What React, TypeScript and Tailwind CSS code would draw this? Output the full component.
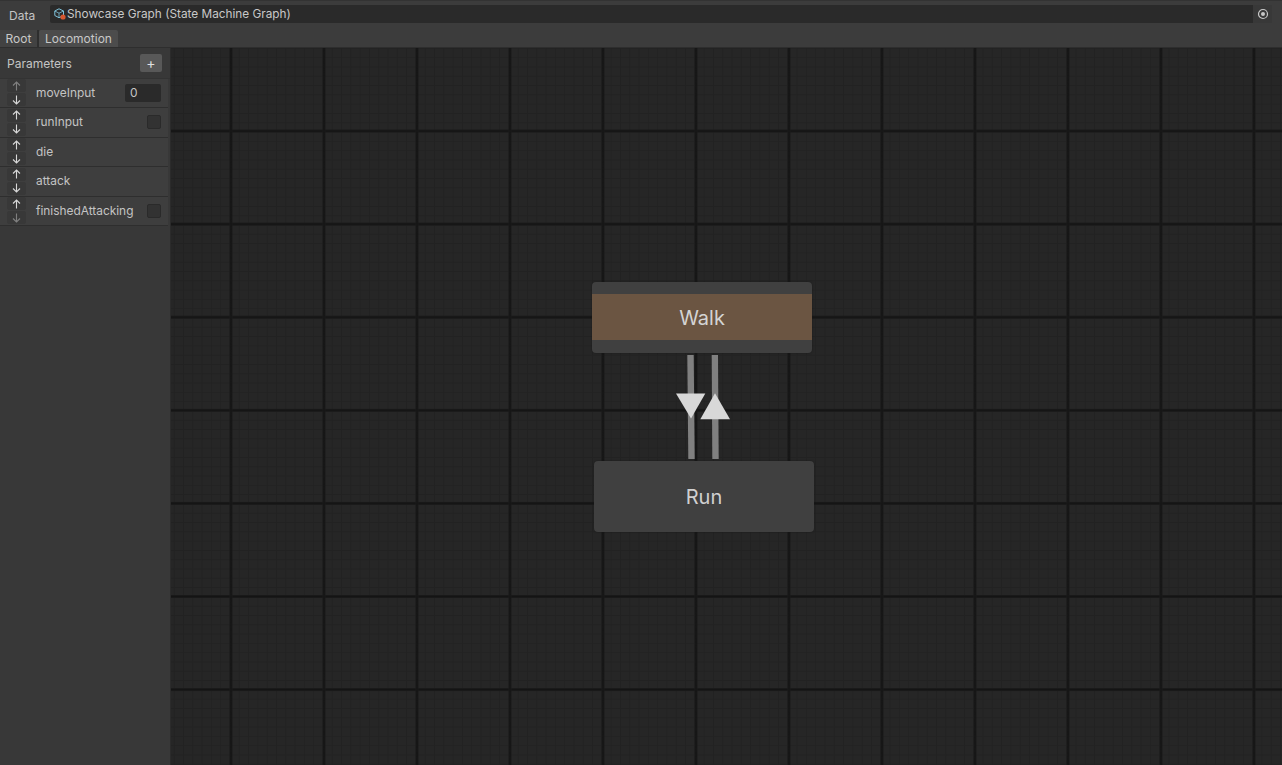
import React from "react";

function Arrow({ up, dim }: { up?: boolean; dim?: boolean }) {
  return (
    <div className="flex h-[13px] w-[19px] items-center justify-center rounded-[2px] bg-[#383838]">
      <svg width="9" height="10" viewBox="0 0 9 10" fill="none" stroke={dim ? "#808080" : "#d8d8d8"} strokeWidth="1.1">
        {up ? <path d="M4.5 9.5V1M1 4.5L4.5 1L8 4.5" /> : <path d="M4.5 0.5V9M1 5.5L4.5 9L8 5.5" />}
      </svg>
    </div>
  );
}

function Row({ name, upDim, downDim, children }: { name: string; upDim?: boolean; downDim?: boolean; children?: React.ReactNode }) {
  return (
    <div className="flex h-[29.5px] w-[168px] items-center border-b border-[#2e2e2e] bg-[#3e3e3e] pl-[7px]">
      <div className="flex w-[19px] flex-col gap-[1px]">
        <Arrow up dim={upDim} />
        <Arrow dim={downDim} />
      </div>
      <span className="ml-[10px] flex-1 text-[11.9px] text-[#c4c4c4]">{name}</span>
      {children}
    </div>
  );
}

function Check() {
  return <div className="mr-[7px] h-[14px] w-[14px] rounded-[2px] border border-[#2a2a2a] bg-[#323232]" />;
}

export default function App() {
  return (
    <div className="flex h-[765px] w-[1282px] flex-col overflow-hidden bg-[#383838] font-['Inter','Liberation_Sans',sans-serif]">
      <div className="flex h-[28px] items-start border-t border-[#333333] bg-[#3c3c3c] pl-[9px] pr-[10px] pt-[4px]">
        <span className="w-[41px] pt-[2px] text-[12px] text-[#c4c4c4]">Data</span>
        <div className="flex h-[18px] flex-1 items-center rounded-[2px] bg-[#2a2a2a] pl-[4px]">
          <svg width="12" height="12" viewBox="0 0 12 12" fill="none">
            <path d="M5 0.8L9.5 3V7.5L5 9.7L0.8 7.5V3Z" stroke="#7fc4dc" strokeWidth="1" />
            <path d="M0.8 3L5 5.2L9.5 3M5 5.2V9.7" stroke="#7fc4dc" strokeWidth="0.8" />
            <circle cx="9" cy="9" r="2.6" fill="#d8572e" />
          </svg>
          <span className="ml-[1px] flex-1 pt-[1px] text-[11.8px] text-[#c8c8c8]">Showcase Graph (State Machine Graph)</span>
          <div className="flex h-[18px] w-[19px] items-center justify-center bg-[#383838]">
            <svg width="12" height="12" viewBox="0 0 12 12" fill="none">
              <circle cx="6" cy="6" r="4.5" stroke="#c8c8c8" strokeWidth="1.2" />
              <circle cx="6" cy="6" r="2" fill="#c8c8c8" />
            </svg>
          </div>
        </div>
      </div>
      <div className="flex h-[20px] items-end border-b border-[#2e2e2e] bg-[#3c3c3c]">
        <div className="flex h-[17px] w-[37px] items-center justify-center bg-[#424242] text-[12px] text-[#c8c8c8]">Root</div>
        <div className="h-[17px] w-[2px] bg-[#2e2e2e]" />
        <div className="flex h-[17px] w-[79px] items-center justify-center rounded-t-[2px] bg-[#4c4c4c] text-[12px] text-[#c8c8c8]">Locomotion</div>
      </div>
      <div className="flex min-h-0 flex-1">
        <div className="w-[171px] shrink-0 border-r border-[#2b2b2b] bg-[#383838]">
          <div className="flex h-[30.5px] items-center justify-between border-b border-[#333333] pl-[7px] pr-[8px]">
            <span className="pt-[2px] text-[12px] text-[#c4c4c4]">Parameters</span>
            <div className="flex h-[18px] w-[22px] items-center justify-center rounded-[2px] bg-[#585858] text-[14px] leading-none text-[#e0e0e0]">+</div>
          </div>
          <Row name="moveInput" upDim>
            <div className="mr-[7px] flex h-[18px] w-[36px] items-center rounded-[2px] bg-[#2a2a2a] pl-[5px] text-[12px] text-[#c4c4c4]">0</div>
          </Row>
          <Row name="runInput"><Check /></Row>
          <Row name="die" />
          <Row name="attack" />
          <Row name="finishedAttacking" downDim><Check /></Row>
        </div>
        <div className="relative flex-1 overflow-hidden bg-[#262626] bg-[linear-gradient(90deg,#1e1e1e_0,#141414_1px,#141414_2px,#1e1e1e_3px,transparent_3px),linear-gradient(0deg,#1e1e1e_0,#141414_1px,#141414_2px,#1e1e1e_3px,transparent_3px),linear-gradient(90deg,#222222_0,#222222_1px,transparent_1px),linear-gradient(0deg,#222222_0,#222222_1px,transparent_1px)] bg-[size:93px_93.1px,93px_93.1px,9.3px_9.31px,9.3px_9.31px] bg-[position:58.5px_0,0_84.5px,58.5px_0,0_84.5px]">
          <div className="absolute left-[421px] top-[234px] flex h-[71px] w-[220px] items-center justify-center rounded-[4px] bg-[#404040] pb-[1px] shadow-[0_0_2px_#1a1a1a]">
            <div className="flex h-[46px] w-full items-center justify-center bg-[#6b5542] pt-[1px] text-[20px] text-[#d4d4d4]">Walk</div>
          </div>
          <div className="absolute left-[423px] top-[413px] flex h-[71px] w-[220px] items-center justify-center rounded-[4px] bg-[#404040] text-[20px] text-[#d0d0d0] shadow-[0_0_2px_#1a1a1a]">Run</div>
          <svg className="absolute left-0 top-0" width="1111" height="717" viewBox="171 48 1111 717">
            <polygon points="687.3,355 693.7,355 694.7,459 688.3,459" fill="#808080" />
            <polygon points="711.7,355 718,355 718.7,459 712.3,459" fill="#808080" />
            <polygon points="676,393.5 705.3,393.5 691,418.5" fill="#d8d8d8" />
            <polygon points="700.3,419.3 730,419.3 715,393.3" fill="#d8d8d8" />
          </svg>
        </div>
      </div>
    </div>
  );
}
